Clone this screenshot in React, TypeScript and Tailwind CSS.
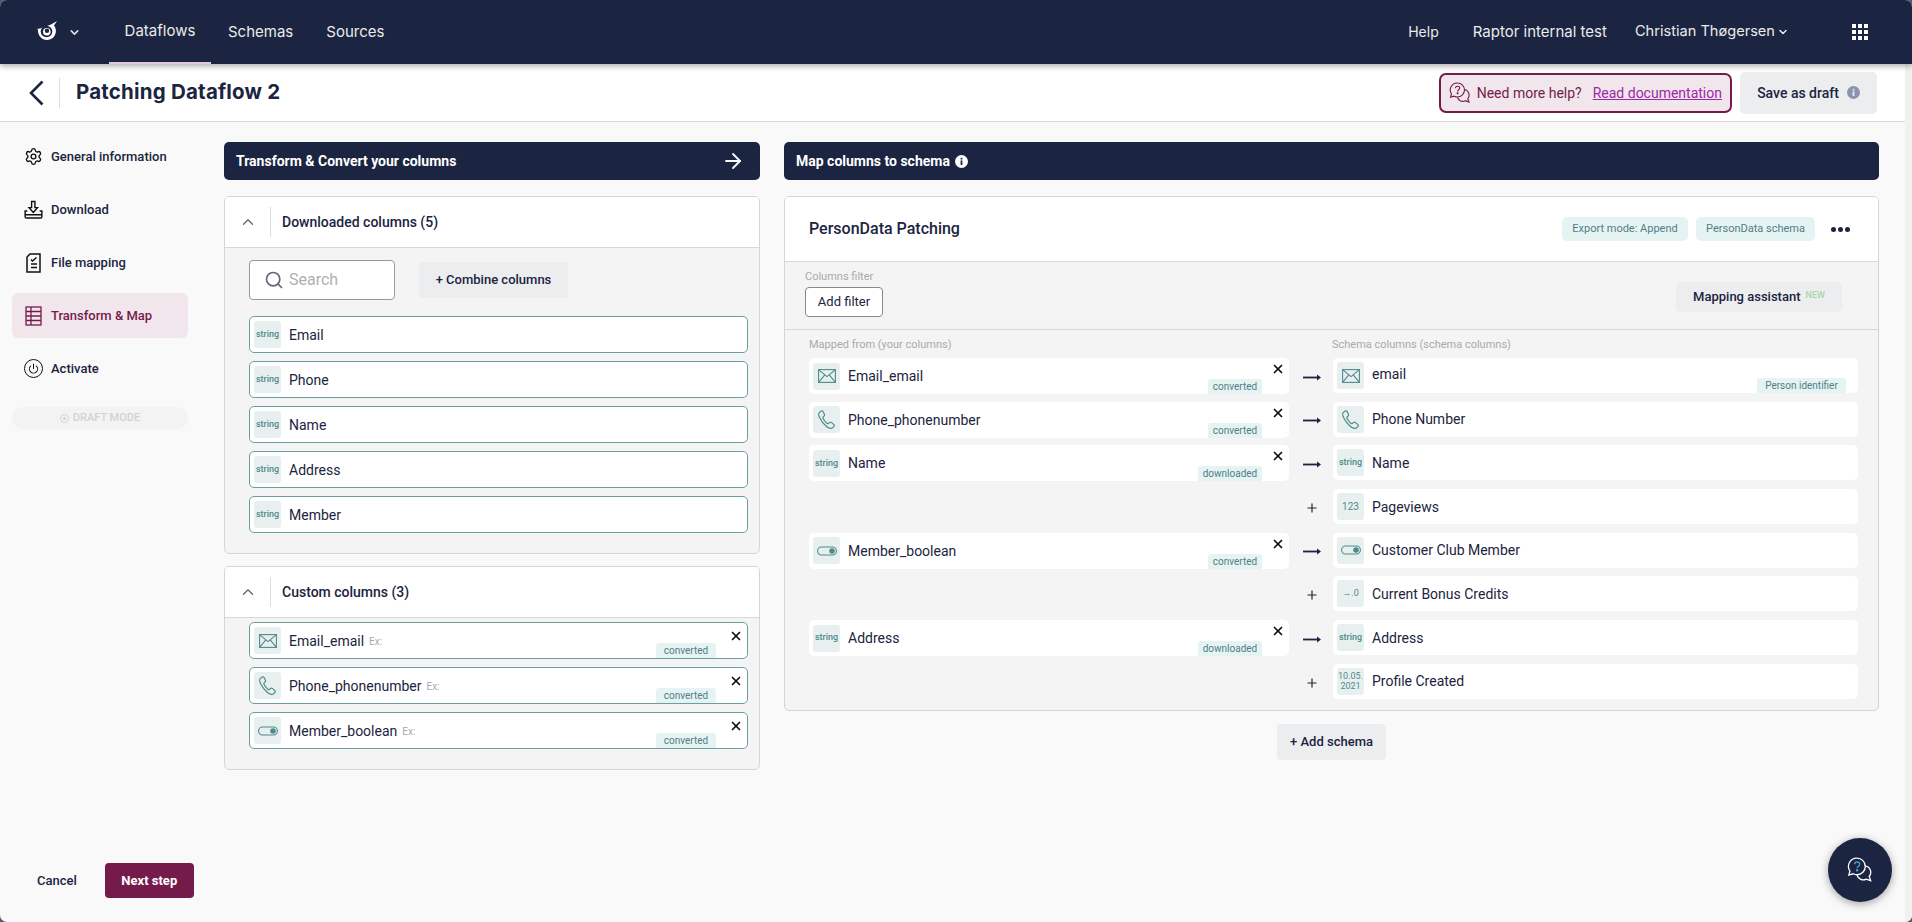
import { ReactNode } from "react";
import { ArrowRight, ChevronDown, ChevronUp, Plus, Power, Search, Settings, X } from "lucide-react";

const MailIcon = () => (
    <svg width="18" height="14" viewBox="0 0 18 14" fill="none" stroke="#4f8a8b" strokeWidth="1.1">
        <rect x="0.6" y="0.6" width="16.8" height="12.8" />
        <path d="M0.6 0.6 9 7.6l8.4-7M0.6 13.4 6.8 5.8M17.4 13.4 11.2 5.8" />
    </svg>
);

const PhoneIcon = () => (
    <svg width="17" height="19" viewBox="0 0 17 19" fill="none" stroke="#4f8a8b" strokeWidth="1.2">
        <path d="M3.2 1 1.2 2.6C.4 3.4.6 5.6 1.8 8c1.5 3 3.6 5.8 6.4 8.2 2 1.7 4.8 2.6 6 1.8l1.8-1.6c.5-.6.4-1.3-.1-1.8l-2.6-2.2c-.6-.4-1.2-.4-1.7 0l-1.2 1c-.5.3-1 .2-1.5-.2-1.5-1.3-3-3.2-3.9-5-.3-.6-.2-1 .2-1.4l1-1c.4-.5.4-1 .2-1.6L4.9 1.3C4.5.7 3.8.6 3.2 1Z" />
    </svg>
);

const ToggleIcon = () => (
    <svg width="20" height="10" viewBox="0 0 20 10" fill="none">
        <rect x="0.6" y="1" width="18.8" height="8" rx="4" stroke="#4f8a8b" strokeWidth="1.1" />
        <circle cx="15" cy="5" r="2.8" fill="#4f8a8b" />
    </svg>
);

const InfoDot = ({ bg, fg }: { bg: string; fg: string }) => (
    <svg width="13" height="13" viewBox="0 0 13 13">
        <circle cx="6.5" cy="6.5" r="6.5" fill={bg} />
        <rect x="5.6" y="5.4" width="1.8" height="4.6" fill={fg} />
        <rect x="5.6" y="2.8" width="1.8" height="1.7" fill={fg} />
    </svg>
);

const LongArrow = () => (
    <svg width="18" height="7" viewBox="0 0 18 7" fill="#1b2440">
        <rect x="0" y="2.6" width="15" height="1.8" />
        <path d="M14 0.5 18 3.5 14 6.5Z" />
    </svg>
);

const HelpBubbles = ({ stroke, mark, size }: { stroke: string; mark: string; size: number }) => (
    <svg width={size} height={size} viewBox="0 0 22 22" fill="none" stroke={stroke} strokeWidth="1.1">
        <path d="M8.5 1a7 7 0 0 1 0 14c-1.2 0-2.3-.3-3.300-.8L1.500 15.300l1-3.300A7 7 0 0 1 8.500 1Z" />
        <path d="M15 7.500a5.500 5.500 0 0 1 3.800 9l1.200 3.500-3.700-1.300a5.500 5.500 0 0 1-7.800-3.200" />
        <path d="M6.500 6.200c0-1.200.9-2 2.100-2 1.200 0 2.100.8 2.100 1.900 0 1.600-2.100 1.700-2.100 3.300" stroke={mark} />
        <circle cx="8.600" cy="11.300" r=".5" fill={mark} stroke={mark} />
    </svg>
);

const LogoIcon = () => (
    <svg width="24" height="22" viewBox="0 0 24 22">
        <path d="M1 7.500c1 .4 2.500.4 4-.2l10-3.800L21 0l-3 4.500c1.200 1.500 1.900 3.300 1.900 5.500 0 5-4 9-9 9-5.200 0-9.200-4.600-9-10.500Z" fill="#fff" />
        <circle cx="10.500" cy="10.500" r="5.800" fill="#1b2440" />
        <circle cx="10.800" cy="10.800" r="3.800" fill="#fff" />
        <circle cx="11" cy="9.800" r="2.200" fill="#1b2440" />
    </svg>
);

const sideIcons: Record<string, ReactNode> = {
    general: <Settings size={19} strokeWidth={1.7} color="#111" />,
    download: (
        <svg width="20" height="20" viewBox="0 0 20 20" fill="none" stroke="#111" strokeWidth="1.5">
            <path d="M8 1h3.500v6.500h2.700L9.800 12.500 5.300 7.500H8Z" />
            <path d="M3.500 11H1.200v6.200c0 .8.500 1.300 1.300 1.300h15c.8 0 1.300-.5 1.300-1.300V11h-2.300" />
            <path d="M1.200 15h17.600" />
        </svg>
    ),
    file: (
        <svg width="19" height="20" viewBox="0 0 19 20" fill="none" stroke="#111" strokeWidth="1.5">
            <path d="M6 1h10v18H3V4Z" />
            <path d="M7 6.500l1.500 1.500L12.500 4.500M7 11h6M7 14.500h6" />
        </svg>
    ),
    table: (
        <svg width="19" height="20" viewBox="0 0 19 20" fill="none" stroke="#751b4b" strokeWidth="1.3">
            <rect x="2" y="1" width="15" height="18" />
            <path d="M2 5.500h15M2 10h15M2 14.500h15M7 1v18" />
        </svg>
    ),
    power: (
        <span className="flex h-[19px] w-[19px] items-center justify-center rounded-full border-[1.5px] border-[#111]">
            <Power size={11} strokeWidth={2.2} color="#111" />
        </span>
    ),
};

const sideItems = [
    { icon: "general", label: "General information" },
    { icon: "download", label: "Download" },
    { icon: "file", label: "File mapping" },
    { icon: "table", label: "Transform & Map", active: true },
    { icon: "power", label: "Activate" },
];

const TypeBox = ({ type }: { type: string }) => {
    let inner: ReactNode = <span className="text-[9px] font-medium text-[#4f8a8b]">{type}</span>;
    if (type === "mail") inner = <MailIcon />;
    if (type === "phone") inner = <PhoneIcon />;
    if (type === "toggle") inner = <ToggleIcon />;
    if (type === "123") inner = <span className="text-[10px] text-[#4f8a8b]">123</span>;
    if (type === "dec") inner = <span className="text-[9px] text-[#4f8a8b]">→.0</span>;
    if (type === "date")
        inner = (
            <span className="text-center text-[9px] leading-[10px] text-[#4f8a8b]">
                10.05.
                <br />
                2021
            </span>
        );
    return <div className="flex h-[27px] w-[27px] shrink-0 items-center justify-center rounded-[3px] bg-[#e8f0ef]">{inner}</div>;
};

const Tag = ({ label, className }: { label: string; className: string }) => (
    <span className={`absolute bottom-0 flex h-[15px] items-center justify-center rounded-t-[3px] bg-[#e6f3f3] text-[10px] text-[#4f8087] ${className}`}>
        {label}
    </span>
);

const ColumnRow = ({ type, name }: { type: string; name: string }) => (
    <div className="flex h-[37px] items-center gap-2 rounded-[5px] border border-[#6a9fa0] bg-white pl-1">
        <TypeBox type={type} />
        <span className="text-sm">{name}</span>
    </div>
);

const CustomRow = ({ type, name }: { type: string; name: string }) => (
    <div className="relative flex h-[37px] items-center gap-2 rounded-[5px] border border-[#6a9fa0] bg-white pl-1">
        <TypeBox type={type} />
        <span className="text-sm">{name}</span>
        <span className="-ml-[3px] mt-[2px] text-[10px] text-[#aaa]">Ex:</span>
        <Tag label="converted" className="right-[31px] w-[60px]" />
        <X size={14} strokeWidth={3} color="#111" className="absolute right-[4px] top-[6px]" />
    </div>
);

const CardHead = ({ title }: { title: string }) => (
    <div className="flex h-[51px] items-center border-b border-[#d8d8d8] bg-white">
        <div className="flex h-[30px] w-[46px] items-center justify-center border-r border-[#ddd]">
            <ChevronUp size={18} color="#667" strokeWidth={1.8} />
        </div>
        <span className="ml-[11px] text-sm font-medium">{title}</span>
    </div>
);

const SectionBar = ({ children }: { children: ReactNode }) => (
    <div className="flex h-[38px] items-center justify-between rounded-[5px] bg-[#1b2440] px-3 text-sm font-bold text-white">{children}</div>
);

const mappings = [
    { left: { type: "mail", name: "Email_email", tag: "converted" }, right: { type: "mail", name: "email" } },
    { left: { type: "phone", name: "Phone_phonenumber", tag: "converted" }, right: { type: "phone", name: "Phone Number" } },
    { left: { type: "string", name: "Name", tag: "downloaded" }, right: { type: "string", name: "Name" } },
    { right: { type: "123", name: "Pageviews" } },
    { left: { type: "toggle", name: "Member_boolean", tag: "converted" }, right: { type: "toggle", name: "Customer Club Member" } },
    { right: { type: "dec", name: "Current Bonus Credits" } },
    { left: { type: "string", name: "Address", tag: "downloaded" }, right: { type: "string", name: "Address" } },
    { right: { type: "date", name: "Profile Created" } },
];

export default function App() {
    return (
        <div className="h-[922px] w-[1912px] overflow-hidden bg-[#565b68]">
            <div className="relative flex h-full w-full flex-col overflow-hidden rounded-[7px] bg-[#f9f9f9] font-['Roboto',sans-serif] text-[#1b2440]">
                <nav className="relative z-10 flex h-16 shrink-0 items-center bg-[#1b2440] font-['Inter',sans-serif] text-[15px] text-[#ebebeb] shadow-[0_2px_6px_rgba(0,0,0,0.35)]">
                    <div className="ml-[36px] flex w-[73px] items-center">
                        <LogoIcon />
                        <ChevronDown size={13} strokeWidth={3} color="#ddd" className="ml-[8px]" />
                    </div>
                    <div className="flex h-full w-[102px] items-center justify-center border-b-2 border-[#e0c8d8]">Dataflows</div>
                    <span className="ml-[17px]">Schemas</span>
                    <span className="ml-[33px]">Sources</span>
                    <div className="ml-auto flex items-center pr-[44px]">
                        <span className="text-sm">Help</span>
                        <span className="ml-[34px]">Raptor internal test</span>
                        <span className="ml-[28px] text-[14.6px]">Christian Thøgersen</span>
                        <ChevronDown size={12} strokeWidth={3} className="ml-[2px]" />
                        <div className="ml-[63px] grid grid-cols-3 gap-[2px]">
                            {Array.from({ length: 9 }).map((_, i) => (
                                <span key={i} className="h-[4px] w-[4px] bg-white" />
                            ))}
                        </div>
                    </div>
                </nav>

                <div className="flex min-h-0 flex-1">
                    <div className="flex min-w-0 flex-1 flex-col">
                        <header className="flex h-[58px] shrink-0 items-center border-b border-[#d8d8d8] bg-white">
                            <div className="ml-[28px] flex h-[30px] w-[32px] items-center border-r border-[#ddd]">
                                <svg width="16" height="26" viewBox="0 0 16 26" fill="none" stroke="#1b2440" strokeWidth="2.6">
                                    <path d="M14.500 1.500 3 13l11.500 11.500" />
                                </svg>
                            </div>
                            <h1 className="ml-[16px] font-['Inter',sans-serif] text-[20.5px] font-bold tracking-[0.2px]">Patching Dataflow 2</h1>
                            <div className="ml-auto flex h-[40px] items-center rounded-[7px] border-2 border-[#751b4b] bg-[#f1e6ec] pl-[8px] pr-[8px] text-sm text-[#751b4b]">
                                <HelpBubbles stroke="#751b4b" mark="#751b4b" size={22} />
                                <span className="ml-[6px]">Need more help?</span>
                                <a className="ml-[11px] text-[#9c27a8] underline">Read documentation</a>
                            </div>
                            <div className="ml-[8px] mr-[28px] flex h-[42px] w-[137px] items-center justify-center gap-2 rounded-[5px] bg-[#ecedef] text-sm font-medium">
                                Save as draft
                                <InfoDot bg="#8b93ad" fg="#ecedef" />
                            </div>
                        </header>

                        <div className="flex min-h-0 flex-1">
                            <aside className="flex w-[224px] shrink-0 flex-col justify-between pb-[24px] pl-3 pt-3">
                                <div className="flex w-[176px] flex-col gap-2">
                                    {sideItems.map((item) => (
                                        <div
                                            key={item.label}
                                            className={`flex h-[45px] items-center gap-2 rounded-[6px] pl-3 text-[13px] font-medium ${
                                                item.active ? "bg-[#f1e6ec] text-[#751b4b]" : ""
                                            }`}
                                        >
                                            <span className="flex w-[19px] justify-center">{sideIcons[item.icon]}</span>
                                            {item.label}
                                        </div>
                                    ))}
                                    <div className="mt-2 flex h-[22px] items-center justify-center gap-1 rounded-full bg-[#f3f3f3] text-[11px] font-medium text-[#d2d2d2]">
                                        <span className="flex h-[9px] w-[9px] items-center justify-center rounded-full border border-[#d2d2d2]">
                                            <span className="h-[3px] w-[3px] rounded-full bg-[#d2d2d2]" />
                                        </span>
                                        DRAFT MODE
                                    </div>
                                </div>
                                <div className="flex items-center text-[13px] font-medium">
                                    <span className="ml-[25px]">Cancel</span>
                                    <div className="ml-[28px] flex h-[35px] w-[89px] items-center justify-center rounded-[4px] bg-[#751b4b] font-bold text-white">
                                        Next step
                                    </div>
                                </div>
                            </aside>

                            <section className="w-[536px] shrink-0 pt-5">
                                <SectionBar>
                                    Transform & Convert your columns
                                    <ArrowRight size={24} strokeWidth={1.8} className="mr-[3px]" />
                                </SectionBar>
                                <div className="mt-4 overflow-hidden rounded-[5px] border border-[#d5d5d5] bg-[#f4f4f4]">
                                    <CardHead title="Downloaded columns (5)" />
                                    <div className="pb-5 pl-6 pr-[11px] pt-3">
                                        <div className="mb-4 flex items-center">
                                            <div className="flex h-[40px] w-[146px] items-center rounded-[4px] border border-[#999] bg-white pl-[14px]">
                                                <Search size={20} strokeWidth={2} color="#667" />
                                                <span className="ml-[5px] text-base text-[#b0b0b0]">Search</span>
                                            </div>
                                            <div className="ml-6 flex h-[36px] w-[149px] items-center justify-center rounded-[4px] bg-[#ecedef] text-[13px] font-medium">
                                                + Combine columns
                                            </div>
                                        </div>
                                        <div className="flex flex-col gap-2">
                                            {["Email", "Phone", "Name", "Address", "Member"].map((name) => (
                                                <ColumnRow key={name} type="string" name={name} />
                                            ))}
                                        </div>
                                    </div>
                                </div>
                                <div className="mt-3 overflow-hidden rounded-[5px] border border-[#d5d5d5] bg-[#f4f4f4]">
                                    <CardHead title="Custom columns (3)" />
                                    <div className="flex flex-col gap-2 pb-5 pl-6 pr-[11px] pt-1">
                                        <CustomRow type="mail" name="Email_email" />
                                        <CustomRow type="phone" name="Phone_phonenumber" />
                                        <CustomRow type="toggle" name="Member_boolean" />
                                    </div>
                                </div>
                            </section>

                            <section className="ml-6 min-w-0 flex-1 pr-[26px] pt-5">
                                <SectionBar>
                                    <span className="flex items-center gap-[5px]">
                                        Map columns to schema
                                        <InfoDot bg="#fff" fg="#1b2440" />
                                    </span>
                                </SectionBar>
                                <div className="mt-4 overflow-hidden rounded-[5px] border border-[#d5d5d5] bg-[#f4f4f4]">
                                    <div className="flex h-[65px] items-center border-b border-[#d8d8d8] bg-white pl-6 pr-[28px]">
                                        <span className="text-base font-medium">PersonData Patching</span>
                                        <div className="ml-auto flex h-[24px] w-[126px] items-center justify-center rounded-[5px] bg-[#e6f3f3] text-[11px] text-[#4f8087]">
                                            Export mode: Append
                                        </div>
                                        <div className="ml-[8px] flex h-[24px] w-[119px] items-center justify-center rounded-[5px] bg-[#e6f3f3] text-[11px] text-[#4f8087]">
                                            PersonData schema
                                        </div>
                                        <div className="ml-[16px] flex gap-[2px]">
                                            <span className="h-[5px] w-[5px] rounded-full bg-[#1b2440]" />
                                            <span className="h-[5px] w-[5px] rounded-full bg-[#1b2440]" />
                                            <span className="h-[5px] w-[5px] rounded-full bg-[#1b2440]" />
                                        </div>
                                    </div>
                                    <div className="flex h-[68px] items-start border-b border-[#d8d8d8] pl-5 pr-[36px] pt-2">
                                        <div>
                                            <div className="text-[11px] leading-[14px] text-[#aaa]">Columns filter</div>
                                            <div className="mt-[3px] flex h-[30px] w-[78px] items-center justify-center rounded-[4px] border border-[#888] bg-white text-[13px]">
                                                Add filter
                                            </div>
                                        </div>
                                        <div className="ml-auto mt-3 flex h-[30px] w-[166px] items-center justify-center gap-[5px] rounded-[5px] bg-[#ecedef] text-[13px] font-medium">
                                            Mapping assistant
                                            <span className="mb-[3px] text-[9px] text-[#a8d8a8]">NEW</span>
                                        </div>
                                    </div>
                                    <div className="pb-[2px] pl-6 pr-[20px] pt-2">
                                        <div className="mb-[6px] grid grid-cols-[480px_44px_1fr] text-[11px] leading-[14px] text-[#aaa]">
                                            <span>Mapped from (your columns)</span>
                                            <span />
                                            <span className="-ml-[1px]">Schema columns (schema columns)</span>
                                        </div>
                                        {mappings.map((row) => (
                                            <div key={row.right.name} className="grid h-[43.7px] grid-cols-[480px_44px_1fr]">
                                                {row.left ? (
                                                    <div className="relative flex h-[36px] items-center gap-2 rounded-[5px] bg-white pl-1">
                                                        <TypeBox type={row.left.type} />
                                                        <span className="text-sm">{row.left.name}</span>
                                                        <Tag
                                                            label={row.left.tag}
                                                            className={`right-[27px] ${row.left.tag === "converted" ? "w-[54px]" : "w-[64px]"}`}
                                                        />
                                                        <X size={14} strokeWidth={3} color="#111" className="absolute right-[4px] top-[4px]" />
                                                    </div>
                                                ) : (
                                                    <div />
                                                )}
                                                <div className="flex h-[35px] items-center justify-center pl-[2px] pt-[3px]">
                                                    {row.left ? <LongArrow /> : <Plus size={14} strokeWidth={2} />}
                                                </div>
                                                <div className="relative flex h-[35px] items-center gap-2 rounded-[5px] bg-white pl-1">
                                                    <TypeBox type={row.right.type} />
                                                    <span className={`text-sm ${row.right.name === "email" ? "-mt-[4px]" : ""}`}>{row.right.name}</span>
                                                    {row.right.name === "email" && <Tag label="Person identifier" className="right-[12px] w-[89px]" />}
                                                </div>
                                            </div>
                                        ))}
                                    </div>
                                </div>
                                <div className="mt-[13px] flex justify-center">
                                    <div className="flex h-[36px] w-[109px] items-center justify-center rounded-[4px] bg-[#ecedef] text-[13px] font-medium">
                                        + Add schema
                                    </div>
                                </div>
                            </section>
                        </div>
                    </div>
                    <div className="w-[7px] shrink-0 bg-[#f1f1f1]" />
                </div>

                <div className="absolute bottom-[20px] right-[20px] flex h-[64px] w-[64px] items-center justify-center rounded-full bg-[#1b2440] shadow-[0_2px_8px_rgba(0,0,0,0.35)]">
                    <HelpBubbles stroke="#fff" mark="#4aa3d8" size={26} />
                </div>
            </div>
        </div>
    );
}
